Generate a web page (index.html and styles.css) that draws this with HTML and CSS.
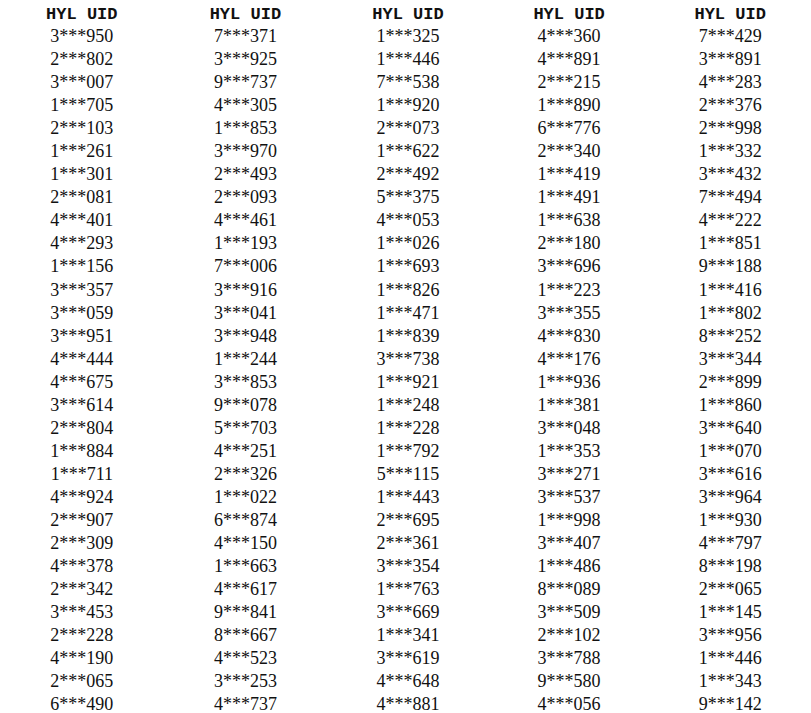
FILE: index.html
```html
<!DOCTYPE html>
<html>
<head>
<meta charset="utf-8">
<link rel="stylesheet" href="styles.css">
</head>
<body>
<div class="board">
  <div class="col c1">
    <div class="head">HYL UID</div>
    <div class="cell">3***950</div><div class="cell">2***802</div><div class="cell">3***007</div><div class="cell">1***705</div><div class="cell">2***103</div>
    <div class="cell">1***261</div><div class="cell">1***301</div><div class="cell">2***081</div><div class="cell">4***401</div><div class="cell">4***293</div>
    <div class="cell">1***156</div><div class="cell">3***357</div><div class="cell">3***059</div><div class="cell">3***951</div><div class="cell">4***444</div>
    <div class="cell">4***675</div><div class="cell">3***614</div><div class="cell">2***804</div><div class="cell">1***884</div><div class="cell">1***711</div>
    <div class="cell">4***924</div><div class="cell">2***907</div><div class="cell">2***309</div><div class="cell">4***378</div><div class="cell">2***342</div>
    <div class="cell">3***453</div><div class="cell">2***228</div><div class="cell">4***190</div><div class="cell">2***065</div><div class="cell">6***490</div>
  </div>
  <div class="col c2">
    <div class="head">HYL UID</div>
    <div class="cell">7***371</div><div class="cell">3***925</div><div class="cell">9***737</div><div class="cell">4***305</div><div class="cell">1***853</div>
    <div class="cell">3***970</div><div class="cell">2***493</div><div class="cell">2***093</div><div class="cell">4***461</div><div class="cell">1***193</div>
    <div class="cell">7***006</div><div class="cell">3***916</div><div class="cell">3***041</div><div class="cell">3***948</div><div class="cell">1***244</div>
    <div class="cell">3***853</div><div class="cell">9***078</div><div class="cell">5***703</div><div class="cell">4***251</div><div class="cell">2***326</div>
    <div class="cell">1***022</div><div class="cell">6***874</div><div class="cell">4***150</div><div class="cell">1***663</div><div class="cell">4***617</div>
    <div class="cell">9***841</div><div class="cell">8***667</div><div class="cell">4***523</div><div class="cell">3***253</div><div class="cell">4***737</div>
  </div>
  <div class="col c3">
    <div class="head">HYL UID</div>
    <div class="cell">1***325</div><div class="cell">1***446</div><div class="cell">7***538</div><div class="cell">1***920</div><div class="cell">2***073</div>
    <div class="cell">1***622</div><div class="cell">2***492</div><div class="cell">5***375</div><div class="cell">4***053</div><div class="cell">1***026</div>
    <div class="cell">1***693</div><div class="cell">1***826</div><div class="cell">1***471</div><div class="cell">1***839</div><div class="cell">3***738</div>
    <div class="cell">1***921</div><div class="cell">1***248</div><div class="cell">1***228</div><div class="cell">1***792</div><div class="cell">5***115</div>
    <div class="cell">1***443</div><div class="cell">2***695</div><div class="cell">2***361</div><div class="cell">3***354</div><div class="cell">1***763</div>
    <div class="cell">3***669</div><div class="cell">1***341</div><div class="cell">3***619</div><div class="cell">4***648</div><div class="cell">4***881</div>
  </div>
  <div class="col c4">
    <div class="head">HYL UID</div>
    <div class="cell">4***360</div><div class="cell">4***891</div><div class="cell">2***215</div><div class="cell">1***890</div><div class="cell">6***776</div>
    <div class="cell">2***340</div><div class="cell">1***419</div><div class="cell">1***491</div><div class="cell">1***638</div><div class="cell">2***180</div>
    <div class="cell">3***696</div><div class="cell">1***223</div><div class="cell">3***355</div><div class="cell">4***830</div><div class="cell">4***176</div>
    <div class="cell">1***936</div><div class="cell">1***381</div><div class="cell">3***048</div><div class="cell">1***353</div><div class="cell">3***271</div>
    <div class="cell">3***537</div><div class="cell">1***998</div><div class="cell">3***407</div><div class="cell">1***486</div><div class="cell">8***089</div>
    <div class="cell">3***509</div><div class="cell">2***102</div><div class="cell">3***788</div><div class="cell">9***580</div><div class="cell">4***056</div>
  </div>
  <div class="col c5">
    <div class="head">HYL UID</div>
    <div class="cell">7***429</div><div class="cell">3***891</div><div class="cell">4***283</div><div class="cell">2***376</div><div class="cell">2***998</div>
    <div class="cell">1***332</div><div class="cell">3***432</div><div class="cell">7***494</div><div class="cell">4***222</div><div class="cell">1***851</div>
    <div class="cell">9***188</div><div class="cell">1***416</div><div class="cell">1***802</div><div class="cell">8***252</div><div class="cell">3***344</div>
    <div class="cell">2***899</div><div class="cell">1***860</div><div class="cell">3***640</div><div class="cell">1***070</div><div class="cell">3***616</div>
    <div class="cell">3***964</div><div class="cell">1***930</div><div class="cell">4***797</div><div class="cell">8***198</div><div class="cell">2***065</div>
    <div class="cell">1***145</div><div class="cell">3***956</div><div class="cell">1***446</div><div class="cell">1***343</div><div class="cell">9***142</div>
  </div>
</div>
</body>
</html>
```

FILE: styles.css
```css
html, body {
  margin: 0;
  padding: 0;
  background: #ffffff;
}
body {
  width: 811px;
  height: 713px;
  overflow: hidden;
  color: #111111;
  font-family: "Liberation Serif", "Times New Roman", serif;
}
.board {
  display: flex;
  padding-top: 4px;
}
.col {
  display: flex;
  flex-direction: column;
  align-items: center;
}
.c1 { width: 164px; }
.c2 { width: 164px; }
.c3 { width: 162px; }
.c4 { width: 161px; }
.c5 { width: 162px; }
.head {
  height: 21px;
  line-height: 21px;
  font-family: "Liberation Mono", "Courier New", monospace;
  font-weight: bold;
  font-size: 17px;
}
.cell {
  height: 23.05px;
  line-height: 23px;
  font-size: 18px;
}
```
